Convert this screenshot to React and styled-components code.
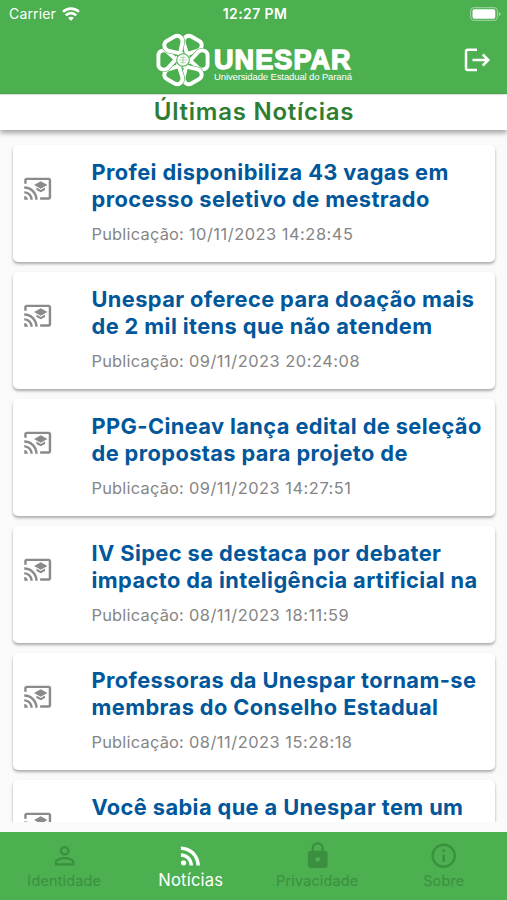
import React from "react";
import styled, { createGlobalStyle } from "styled-components";
import { MdCastForEducation, MdPersonOutline, MdRssFeed, MdLock, MdInfoOutline } from "react-icons/md";

const GlobalStyle = createGlobalStyle`
  * { box-sizing: border-box; }
  body { margin: 0; background: #fafafa; font-family: Inter, "Open Sans", sans-serif; }
`;

const Screen = styled.div`
  display: flex;
  flex-direction: column;
  width: 507px;
  height: 900px;
  overflow: hidden;
  background: #fafafa;
`;

const Header = styled.header`
  flex: none;
  height: 94px;
  background: #4caf50;
  color: #fff;
`;

const StatusBar = styled.div`
  display: grid;
  grid-template-columns: 1fr auto 1fr;
  align-items: center;
  height: 27px;
  padding: 0 6px 0 9px;
`;

const Carrier = styled.div`
  display: flex;
  align-items: center;
  gap: 6px;
  font-size: 14px;
  letter-spacing: 0.15px;
`;

const Clock = styled.div`
  font-size: 14px;
  font-weight: 600;
  letter-spacing: 0.4px;
`;

const BatterySlot = styled.div`
  display: flex;
  justify-content: flex-end;
`;

const AppBar = styled.div`
  display: grid;
  grid-template-columns: 1fr auto 1fr;
  align-items: center;
  height: 65px;
  padding: 0 16px;
`;

const Brand = styled.div`
  display: flex;
  align-items: center;
  gap: 3px;
  grid-column: 2;
`;

const BrandText = styled.div`
  display: flex;
  flex-direction: column;
  gap: 1px;
  width: 138px;
  padding-top: 11px;
  font-family: "Liberation Sans", Arial, sans-serif;
  white-space: nowrap;
`;

const BrandName = styled.span`
  font-size: 27px;
  line-height: 22px;
  font-weight: 700;
  letter-spacing: 1.1px;
  -webkit-text-stroke: 1.4px #fff;
`;

const BrandTagline = styled.span`
  font-size: 9.5px;
  line-height: 10px;
  letter-spacing: -0.12px;
`;

const LogoutButton = styled.button`
  justify-self: end;
  display: flex;
  padding: 0;
  border: 0;
  background: none;
  color: inherit;
`;

const TitleBar = styled.h1`
  flex: none;
  height: 36px;
  margin: 0;
  padding-left: 1px;
  background: #fff;
  color: #2e7d32;
  font-size: 24px;
  line-height: 36px;
  font-weight: 600;
  letter-spacing: 0.75px;
  text-align: center;
  box-shadow: inset 0 2px 1px -1px rgba(0, 0, 0, 0.15), 0 3px 5px rgba(0, 0, 0, 0.35);
`;

const NewsList = styled.main`
  flex: none;
  display: flex;
  flex-direction: column;
  gap: 10px;
  height: 692px;
  margin-bottom: 10px;
  padding: 15px 12px 0 13px;
  overflow: hidden;
`;

const NewsCard = styled.article`
  flex: none;
  display: grid;
  grid-template-columns: 79px 1fr;
  height: 117px;
  background: #fff;
  border-radius: 5px;
  box-shadow: 0 2px 3px rgba(0, 0, 0, 0.32);
`;

const CastIcon = styled(MdCastForEducation)`
  margin: 29.3px 0 0 9.7px;
  width: 29.4px;
  height: 29.4px;
  color: #8a8a8a;
`;

const Headline = styled.h2`
  margin: 14px 0 0 -0.5px;
  color: #01579b;
  font-size: 21.8px;
  line-height: 27px;
  font-weight: 650;
  letter-spacing: 0.4px;
  white-space: nowrap;
`;

const Published = styled.p`
  margin: 10px 0 0 -0.5px;
  color: #858585;
  font-size: 16.4px;
  line-height: 22px;
  letter-spacing: 0.22px;
`;

const Timestamp = styled.time`
  letter-spacing: 0.52px;
`;

const BottomNav = styled.nav`
  flex: none;
  display: grid;
  grid-template-columns: repeat(4, 1fr);
  height: 68px;
  padding-left: 1px;
  background: #4caf50;
`;

const NavItem = styled.a`
  display: flex;
  flex-direction: column;
  align-items: center;
  padding-top: 9px;
  color: ${(p) => (p.$active ? "#fff" : "#3b903f")};
  font-size: ${(p) => (p.$active ? 16.6 : 14.4)}px;
  line-height: ${(p) => (p.$active ? 21 : 22)}px;
  letter-spacing: 0.2px;
  svg { width: 29.4px; height: 29.4px; }
`;

const NEWS = [
  { lines: ["Profei disponibiliza 43 vagas em", "processo seletivo de mestrado"], date: "10/11/2023 14:28:45" },
  { lines: ["Unespar oferece para doação mais", "de 2 mil itens que não atendem"], date: "09/11/2023 20:24:08" },
  { lines: ["PPG-Cineav lança edital de seleção", "de propostas para projeto de"], date: "09/11/2023 14:27:51" },
  { lines: ["IV Sipec se destaca por debater", "impacto da inteligência artificial na"], date: "08/11/2023 18:11:59" },
  { lines: ["Professoras da Unespar tornam-se", "membras do Conselho Estadual"], date: "08/11/2023 15:28:18" },
  { lines: ["Você sabia que a Unespar tem um"], date: "" },
];

const TABS = [
  { label: "Identidade", Icon: MdPersonOutline },
  { label: "Notícias", Icon: MdRssFeed, active: true },
  { label: "Privacidade", Icon: MdLock },
  { label: "Sobre", Icon: MdInfoOutline },
];

function WifiIcon() {
  return (
    <svg width="18" height="14" viewBox="0 0 18 14" fill="none" stroke="#fff" strokeWidth="2.6">
      <path d="M1 4.9a11.4 11.4 0 0 1 16 0" />
      <path d="M3.8 8.3a7.3 7.3 0 0 1 10.4 0" />
      <path d="M9 13.8 6.1 10.9a4 4 0 0 1 5.8 0z" fill="#fff" stroke="none" />
    </svg>
  );
}

function BatteryIcon() {
  return (
    <svg width="31" height="14" viewBox="0 0 31 14">
      <rect x="0.6" y="0.6" width="26.8" height="12.8" rx="3.6" fill="none" stroke="#fff" strokeOpacity="0.4" strokeWidth="1.2" />
      <rect x="2.5" y="2.3" width="22.8" height="9.4" rx="1.8" fill="#fff" />
      <path d="M28.8 4.8q1.8.7 1.8 2.2t-1.8 2.2z" fill="#fff" fillOpacity="0.5" />
    </svg>
  );
}

function FlowerLogo() {
  const angles = [30, 90, 150, 210, 270, 330];
  const petal = "M3-5 -8.3-15.5C-11.3-20-8.5-24.6-4.5-24.6H4.5C8.5-24.6 11.3-20 8.3-15.5L-1-5.5";
  return (
    <svg width="56" height="54" viewBox="-28 -27 56 54" fill="none">
      {angles.map((a) => (
        <g key={a} transform={`rotate(${a})`}>
          <path d={petal} stroke="#4caf50" strokeWidth="5" />
          <path d={petal} stroke="#fff" strokeWidth="3.9" />
        </g>
      ))}
      <circle r="6.8" fill="#4caf50" />
      <circle r="5.8" fill="#fff" />
      <path d="M-4.5 0H4.5M0-4.5V4.5M-3-3Q0-1.2 3-3M-3 3Q0 1.2 3 3" stroke="#4caf50" strokeOpacity="0.7" strokeWidth="0.6" />
    </svg>
  );
}

function LogoutIcon() {
  return (
    <svg width="27" height="24" viewBox="0 0 27 24" fill="none" stroke="#fff" strokeWidth="2.5">
      <path d="M13 1.7H3.8Q2 1.7 2 3.5V20.3Q2 22.1 3.8 22.1H13" />
      <path d="M8.5 12H24M18.8 6.5 24.3 12l-5.5 5.5" />
    </svg>
  );
}

export default function App() {
  return (
    <Screen>
      <GlobalStyle />
      <Header>
        <StatusBar>
          <Carrier>Carrier <WifiIcon /></Carrier>
          <Clock>12:27 PM</Clock>
          <BatterySlot><BatteryIcon /></BatterySlot>
        </StatusBar>
        <AppBar>
          <Brand>
            <FlowerLogo />
            <BrandText>
              <BrandName>UNESPAR</BrandName>
              <BrandTagline>Universidade Estadual do Paraná</BrandTagline>
            </BrandText>
          </Brand>
          <LogoutButton aria-label="Sair"><LogoutIcon /></LogoutButton>
        </AppBar>
      </Header>
      <TitleBar>Últimas Notícias</TitleBar>
      <NewsList>
        {NEWS.map((item) => (
          <NewsCard key={item.lines[0]}>
            <CastIcon />
            <div>
              <Headline>
                {item.lines.map((line) => <div key={line}>{line}</div>)}
              </Headline>
              {item.date && <Published>Publicação: <Timestamp>{item.date}</Timestamp></Published>}
            </div>
          </NewsCard>
        ))}
      </NewsList>
      <BottomNav>
        {TABS.map(({ label, Icon, active }) => (
          <NavItem key={label} $active={active}>
            <Icon />
            <span>{label}</span>
          </NavItem>
        ))}
      </BottomNav>
    </Screen>
  );
}
